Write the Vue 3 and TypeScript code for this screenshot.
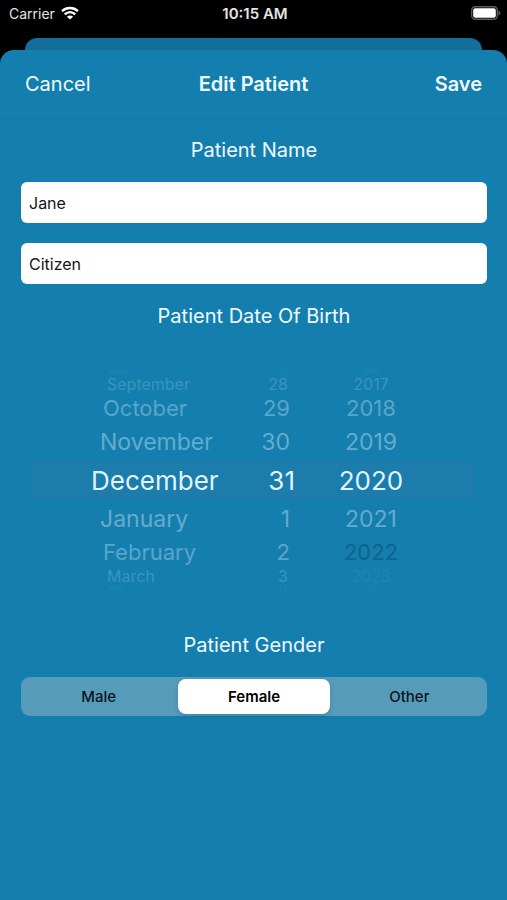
<script setup lang="ts">
import { computed, ref } from 'vue'

interface WheelRow {
  offset: number
  label: string
  disabled: boolean
}

interface WheelColumn {
  name: 'month' | 'day' | 'year'
  label: string
  rows: WheelRow[]
}

const MONTHS = [
  'January', 'February', 'March', 'April', 'May', 'June',
  'July', 'August', 'September', 'October', 'November', 'December',
]
const GENDERS = ['Male', 'Female', 'Other']
const OFFSETS = [-4, -3, -2, -1, 0, 1, 2, 3, 4]
const LAST_YEAR = 2021

const firstName = ref('Jane')
const lastName = ref('Citizen')
const gender = ref('Female')
const month = ref(11)
const day = ref(31)
const year = ref(2020)

const wrap = (value: number, size: number): number => ((value % size) + size) % size

const columns = computed<WheelColumn[]>(() => [
  {
    name: 'month',
    label: 'Month',
    rows: OFFSETS.map((offset) => ({
      offset,
      label: MONTHS[wrap(month.value + offset, 12)],
      disabled: false,
    })),
  },
  {
    name: 'day',
    label: 'Day',
    rows: OFFSETS.map((offset) => ({
      offset,
      label: String(wrap(day.value - 1 + offset, 31) + 1),
      disabled: false,
    })),
  },
  {
    name: 'year',
    label: 'Year',
    rows: OFFSETS.map((offset) => ({
      offset,
      label: String(year.value + offset),
      disabled: year.value + offset > LAST_YEAR,
    })),
  },
])

function turn(column: WheelColumn['name'], offset: number): void {
  if (column === 'month') month.value = wrap(month.value + offset, 12)
  else if (column === 'day') day.value = wrap(day.value - 1 + offset, 31) + 1
  else year.value += offset
}
</script>

<template>
  <div class="screen">
    <header class="status">
      <div class="carrier">
        <span>Carrier</span>
        <svg class="wifi" viewBox="0 0 18 14" aria-hidden="true">
          <path d="M1 5.1C5.5.9 12.5.9 17 5.1" />
          <path d="M3.700 8.400C6.800 5.500 11.200 5.500 14.300 8.400" />
          <path class="dot" d="M9 13.600L5.900 10.700C7.700 9.200 10.300 9.200 12.100 10.700Z" />
        </svg>
      </div>
      <span class="time">10:15 AM</span>
      <svg class="battery" viewBox="0 0 30 14" aria-hidden="true">
        <rect class="shell" x="0.7" y="0.7" width="25.6" height="12.6" rx="3.5" />
        <rect class="charge" x="2.2" y="2.2" width="22.6" height="9.6" rx="2" />
        <path class="tip" d="M27.500 4.500C30 5.300 30 8.700 27.500 9.500Z" />
      </svg>
    </header>

    <div class="behind"></div>

    <form class="sheet" @submit.prevent>
      <nav class="bar">
        <button type="button" class="action">Cancel</button>
        <h1 class="title">Edit Patient</h1>
        <button type="submit" class="action save">Save</button>
      </nav>

      <div class="content">
        <section class="names">
          <h2 class="heading">Patient Name</h2>
          <input v-model="firstName" class="field" type="text" aria-label="First name" />
          <input v-model="lastName" class="field" type="text" aria-label="Last name" />
        </section>

        <section class="birth">
          <h2 class="heading">Patient Date Of Birth</h2>
          <div class="wheel">
            <div
              v-for="column in columns"
              :key="column.name"
              class="column"
              :class="column.name"
              role="group"
              :aria-label="column.label"
            >
              <button
                v-for="row in column.rows"
                :key="row.offset"
                type="button"
                class="row"
                :class="'far-' + Math.abs(row.offset)"
                :disabled="row.disabled"
                @click="turn(column.name, row.offset)"
              >{{ row.label }}</button>
            </div>
          </div>
        </section>

        <fieldset class="gender">
          <legend class="heading">Patient Gender</legend>
          <div class="segments">
            <label v-for="option in GENDERS" :key="option" class="segment">
              <input v-model="gender" type="radio" name="gender" :value="option" />
              <span>{{ option }}</span>
            </label>
          </div>
        </fieldset>
      </div>
    </form>
  </div>
</template>

<style>
body {
  margin: 0;
  background: #000;
}
</style>

<style scoped>
.screen {
  box-sizing: border-box;
  display: flex;
  flex-direction: column;
  min-height: 100vh;
  background: #000;
  color: #eefaff;
  font-family: Inter, "Liberation Sans", sans-serif;
}

button,
input {
  font-family: inherit;
}

button {
  padding: 0;
  border: 0;
  background: none;
  color: inherit;
  cursor: pointer;
}

.status {
  display: grid;
  grid-template-columns: 1fr auto 1fr;
  align-items: center;
  height: 26px;
  margin-bottom: 12px;
  padding: 0 6px 0 9px;
  color: #e4e4e4;
  font-size: 14px;
}

.carrier {
  display: flex;
  align-items: center;
  gap: 6px;
}

.wifi {
  width: 18px;
  height: 14px;
  fill: none;
  stroke: #fff;
  stroke-width: 2.4;
}

.wifi .dot {
  fill: #fff;
  stroke: none;
}

.time {
  font-size: 15px;
  font-weight: 600;
}

.battery {
  justify-self: end;
  width: 30px;
  height: 14px;
}

.shell {
  fill: none;
  stroke: #5c5c5c;
  stroke-width: 1.4;
}

.charge {
  fill: #fff;
}

.tip {
  fill: #5c5c5c;
}

.behind {
  height: 12px;
  margin: 0 25px;
  border-radius: 12px 12px 0 0;
  background: #136f9a;
}

.sheet {
  flex: 1;
  border-radius: 14px 14px 0 0;
  background: #147fae;
}

.bar {
  display: grid;
  grid-template-columns: 1fr auto 1fr;
  align-items: center;
  height: 68px;
  padding: 0 25px;
  border-bottom: 1px solid #127aa8;
}

.action {
  justify-self: start;
  font-size: 20px;
}

.save {
  justify-self: end;
  font-weight: 600;
}

.title {
  margin: 0;
  font-size: 20px;
  font-weight: 600;
}

.content {
  padding: 19px 20px 24px 21px;
}

.heading {
  margin: 0;
  padding: 0;
  font-size: 20px;
  font-weight: 400;
  line-height: 24px;
  text-align: center;
}

.names {
  display: grid;
  gap: 20px;
}

.field {
  box-sizing: border-box;
  width: 100%;
  height: 41px;
  padding: 0 8px;
  border: 0;
  border-radius: 6px;
  background: #fff;
  color: #151515;
  font-size: 16px;
}

.birth {
  margin-top: 20px;
}

.wheel {
  display: grid;
  grid-template-columns: 197fr 67fr 181fr;
  margin: 41px 11px 0 10px;
  background: linear-gradient(#1c7cac, #1c7cac) center / 100% 40px no-repeat;
}

.column {
  display: flex;
  flex-direction: column;
  min-width: 0;
}

.row {
  display: flex;
  align-items: center;
  white-space: nowrap;
}

.month {
  padding-left: 60px;
}

.day .row {
  justify-content: flex-end;
}

.year {
  width: 70px;
  margin-left: 41px;
}

.year .row {
  justify-content: center;
}

.far-0 {
  height: 40px;
  color: #dff4ff;
  font-size: 26px;
}

.far-1 {
  height: 37px;
  padding: 0 5px 0 9px;
  color: #65abcd;
  font-size: 23px;
}

.far-2 {
  height: 30px;
  padding: 0 5px 0 12px;
  color: #5aa5c9;
  font-size: 22px;
}

.far-3 {
  height: 18px;
  padding: 0 7px 0 16px;
  color: #3a94be;
  font-size: 16px;
  line-height: 18px;
}

.far-4 {
  height: 6px;
  padding: 0 8px 0 18px;
  color: #2287b4;
  font-size: 6px;
  line-height: 6px;
}

.year .row {
  padding: 0;
}

.far-2:disabled {
  color: #0f638f;
}

.far-3:disabled,
.far-4:disabled {
  color: #1a86b5;
}

.gender {
  min-width: 0;
  margin: 42px 0 0;
  padding: 0;
  border: 0;
}

.gender .heading {
  width: 100%;
}

.segments {
  display: grid;
  grid-template-columns: repeat(3, 1fr);
  margin-top: 20px;
  border-radius: 9px;
  background: #569bba;
}

.segment {
  position: relative;
  display: flex;
  padding: 2px;
  color: #0b1419;
  font-size: 15px;
  font-weight: 500;
  cursor: pointer;
}

.segment input {
  position: absolute;
  inset: 0;
  margin: 0;
  opacity: 0;
}

.segment span {
  flex: 1;
  border-radius: 8px;
  line-height: 35px;
  text-align: center;
}

.segment input:checked + span {
  background: #fff;
  box-shadow: 0 2px 4px rgba(0, 40, 60, 0.2);
  color: #000;
  font-weight: 600;
}

.segment input:focus-visible + span {
  outline: 2px solid #fff;
}
</style>
